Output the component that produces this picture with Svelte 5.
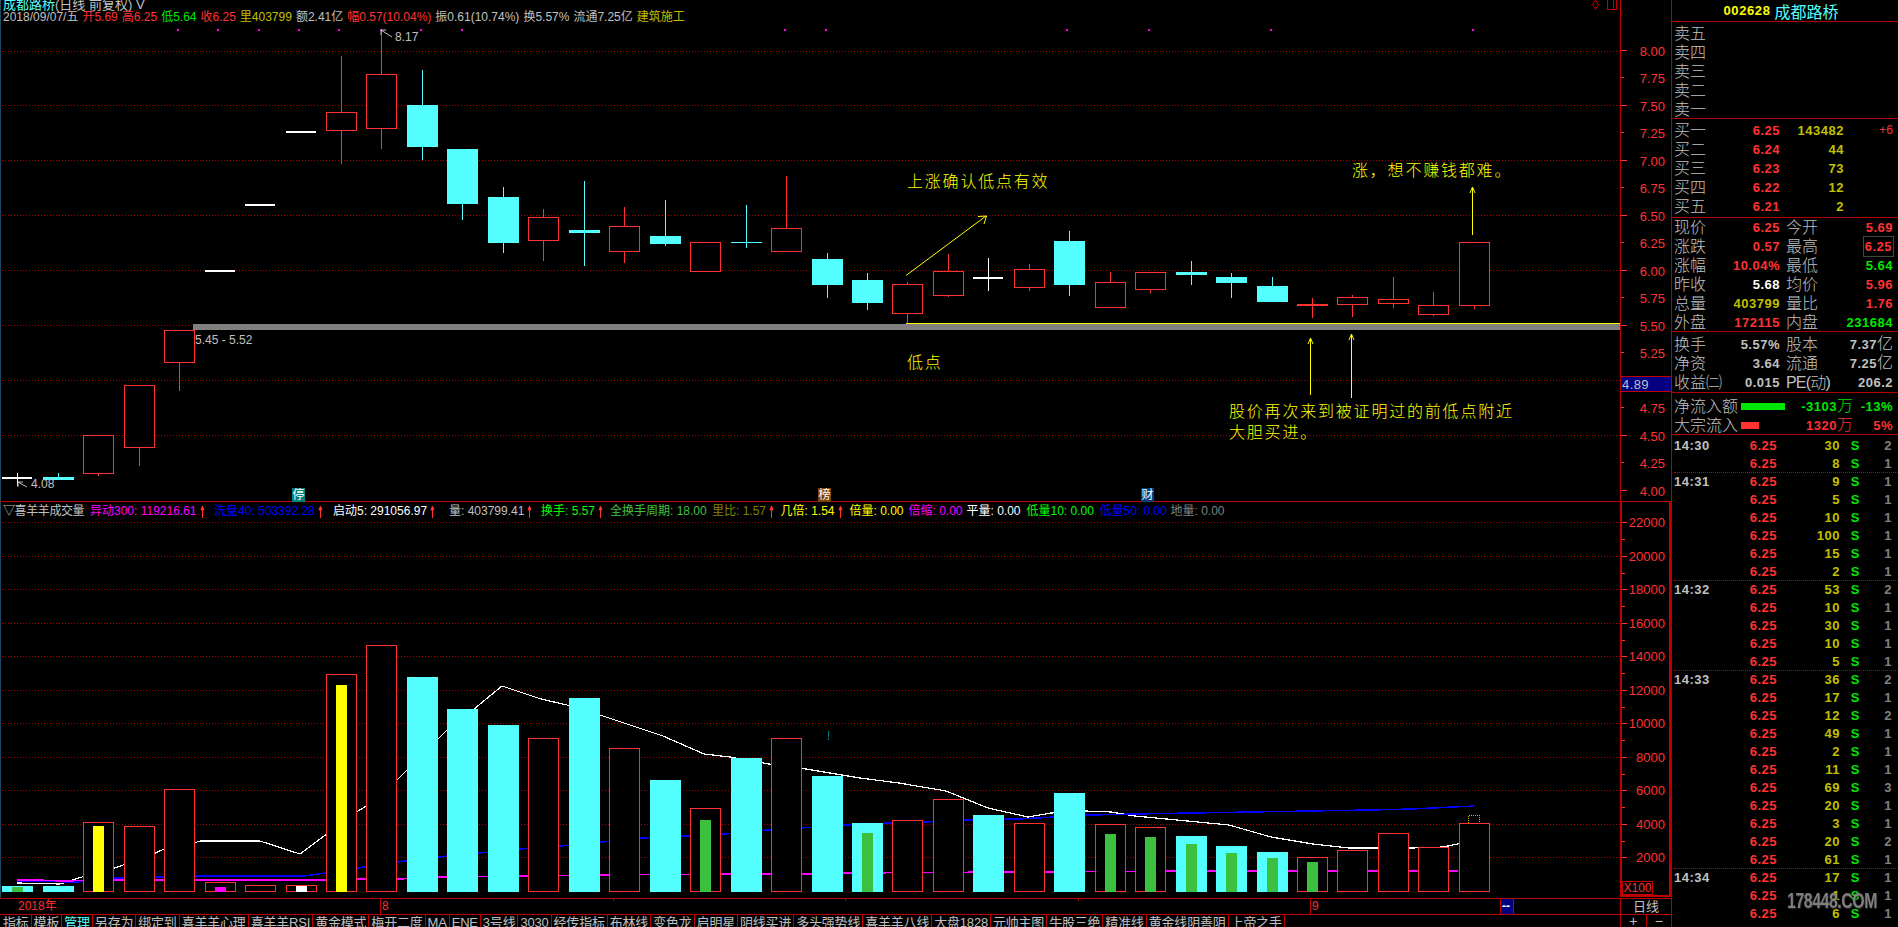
<script>
	// candle position on the shared day axis
	const dayX = (i) => Math.round(17.3 + 40.46 * i);

	// [type, wickTop, bodyTop, bodyBottom, wickBottom]  r = up, c = down, w = flat
	const candles = [
		['w', 473, 477, 477, 485],
		['c', 473, 477, 480, 480],
		['r', 435, 435, 473, 476],
		['r', 385, 385, 447, 466],
		['r', 330, 330, 362, 391],
		['w', 270, 270, 270, 270],
		['w', 204, 204, 204, 204],
		['w', 131, 131, 131, 131],
		['r', 56, 112, 130, 164],
		['r', 30, 74, 128, 149],
		['c', 70, 105, 147, 160],
		['c', 149, 149, 204, 220],
		['c', 187, 197, 243, 253],
		['r', 209, 217, 240, 261],
		['c', 181, 230, 233, 266],
		['r', 207, 226, 251, 263],
		['c', 200, 236, 244, 246],
		['r', 242, 242, 271, 271],
		['c', 205, 242, 243, 248],
		['r', 176, 228, 251, 251],
		['c', 253, 259, 285, 298],
		['c', 273, 280, 303, 310],
		['r', 282, 284, 313, 323],
		['r', 254, 271, 295, 297],
		['w', 258, 277, 277, 290],
		['r', 264, 269, 287, 291],
		['c', 231, 241, 285, 296],
		['r', 272, 282, 307, 307],
		['r', 272, 272, 289, 293],
		['c', 261, 272, 275, 285],
		['c', 273, 277, 283, 298],
		['c', 277, 286, 302, 302],
		['s', 298, 304, 306, 318],
		['r', 295, 297, 304, 317],
		['r', 277, 299, 303, 308],
		['r', 292, 305, 314, 316],
		['r', 242, 242, 305, 309]
	];

	// [type, top, innerColor, innerTop]
	const bars = [
		['c', 886, '#3cc040', 887],
		['c', 886],
		['r', 822, '#ffff00', 826],
		['r', 826],
		['r', 789],
		['r', 882, '#ff00ff', 887],
		['r', 885],
		['r', 885, '#ffffff', 886],
		['r', 674, '#ffff00', 685],
		['r', 645],
		['c', 677],
		['c', 709],
		['c', 725],
		['r', 738],
		['c', 698],
		['r', 748],
		['c', 780],
		['r', 808, '#3cc040', 820],
		['c', 758],
		['r', 738],
		['c', 776],
		['c', 823, '#3cc040', 833],
		['r', 820],
		['r', 799],
		['c', 815],
		['r', 823],
		['c', 793],
		['r', 824, '#3cc040', 834],
		['r', 827, '#3cc040', 837],
		['c', 836, '#3cc040', 844],
		['c', 846, '#3cc040', 853],
		['c', 852, '#3cc040', 858],
		['r', 857, '#3cc040', 862],
		['r', 850],
		['r', 833],
		['r', 847],
		['r', 823]
	];

	const whiteLine = '17,883 60,884 82,877 115,868 153,854 162,850 194,843 200,841 260,841 300,854 324,836 355,813 366,806 398,779 408,769 438,739 447,730 474,709 502,686 541,699 567,705 600,715 663,736 704,754 730,757 769,764 800,768 860,778 899,783 946,791 988,808 1028,817 1051,813 1085,811 1111,812 1135,816 1177,820 1229,825 1271,837 1313,844 1349,848 1373,848 1412,848 1443,847 1458,844 1473,838';
	const blueLine = '17,881 76,882 117,878 194,876 303,876 326,873 357,868 398,862 438,857 480,853 520,849 561,846 602,842 643,838 684,836 724,834 768,830 800,828 863,824 925,822 967,820 1019,819 1090,815 1135,814 1250,812 1370,810 1412,809 1474,806';
	const pinkLine = '17,880 38,880 60,881 115,880 321,880 357,879 398,879 444,877 525,876 602,875 724,874 800,874 847,873 1009,872 1210,871 1458,871';

	const priceDots = [178, 218, 259, 299, 339, 381, 421, 462, 785, 826, 1067, 1149, 1271, 1473];
	const priceGrid = [51, 105, 160, 215, 270, 325, 380, 435];
	const priceTicks = ['8.00', '7.75', '7.50', '7.25', '7.00', '6.75', '6.50', '6.25', '6.00', '5.75', '5.50', '5.25', '5.00', '4.75', '4.50', '4.25', '4.00'];
	const priceY = (p) => Math.round(50.7 + (8 - p) * 110);
	const volTicks = [22000, 20000, 18000, 16000, 14000, 12000, 10000, 8000, 6000, 4000, 2000];
	const volY = (v) => Math.round(857.3 - ((v - 2000) / 2000) * 33.5);

	const indicators = [
		{ text: '异动300: 119216.61', color: '#ff00ff', up: true, w: 124 },
		{ text: '洗盘40: 503392.28', color: '#0000ff', up: true, w: 119 },
		{ text: '启动5: 291056.97', color: '#ffffff', up: true, w: 116 },
		{ text: '量: 403799.41', color: '#c0c0c0', up: true, w: 92 },
		{ text: '换手: 5.57', color: '#00ff00', up: true, w: 69 },
		{ text: '全换手周期: 18.00', color: '#40c040', up: false, w: 102 },
		{ text: '里比: 1.57', color: '#808000', up: true, w: 68.5 },
		{ text: '几倍: 1.54', color: '#ffff00', up: true, w: 69 },
		{ text: '倍量: 0.00', color: '#ffff00', up: false, w: 59 },
		{ text: '倍缩: 0.00', color: '#ff00ff', up: false, w: 58 },
		{ text: '平量: 0.00', color: '#ffffff', up: false, w: 60 },
		{ text: '低量10: 0.00', color: '#00ff00', up: false, w: 73 },
		{ text: '低量50: 0.00', color: '#0000ff', up: false, w: 71 },
		{ text: '地量: 0.00', color: '#808080', up: false, w: 60 }
	];

	const tabs = ['指标', '模板', '管理', '另存为', '绑定到', '喜羊羊心理', '喜羊羊RSI', '黄金模式', '梅开二度', 'MA', 'ENE', '3号线', '3030', '经传指标', '布林线', '变色龙', '启明星', '阴线买进', '多头强势线', '喜羊羊八线', '大盘1828', '元帅主图', '牛股三绝', '精准线', '黄金线阴善阴', '上帝之手'];

	const asks = ['卖五', '卖四', '卖三', '卖二', '卖一'];
	const bids = [
		['买一', '6.25', '143482', '+6'],
		['买二', '6.24', '44', ''],
		['买三', '6.23', '73', ''],
		['买四', '6.22', '12', ''],
		['买五', '6.21', '2', '']
	];
	const quotes = [
		['现价', '6.25', 'red', '今开', '5.69', 'red'],
		['涨跌', '0.57', 'red', '最高', '6.25', 'red boxed'],
		['涨幅', '10.04%', 'red', '最低', '5.64', 'green'],
		['昨收', '5.68', 'white', '均价', '5.96', 'red'],
		['总量', '403799', 'olive', '量比', '1.76', 'red'],
		['外盘', '172115', 'red', '内盘', '231684', 'green']
	];
	const finance = [
		['换手', '5.57%', '股本', '7.37', '亿'],
		['净资', '3.64', '流通', '7.25', '亿'],
		['收益㈡', '0.015', 'PE(动)', '206.2', '']
	];
	const ticks = [
		{ time: '14:30', rows: [[30, 2], [8, 1]] },
		{ time: '14:31', rows: [[9, 1], [5, 1], [10, 1], [100, 1], [15, 1], [2, 1]] },
		{ time: '14:32', rows: [[53, 2], [10, 1], [30, 1], [10, 1], [5, 1]] },
		{ time: '14:33', rows: [[36, 2], [17, 1], [12, 2], [49, 1], [2, 1], [11, 1], [69, 3], [20, 1], [3, 1], [20, 2], [61, 1]] },
		{ time: '14:34', rows: [[17, 1], [1, 1], [6, 1]] }
	];
</script>

<div class="terminal">
	<div class="left">
		<div class="pane price-pane">
			<div class="canvas">
				<svg width="1620" height="501" shape-rendering="crispEdges">
					{#each priceGrid as y}
						<line class="grid" x1="2" x2="1620" y1={y + 0.5} y2={y + 0.5} />
					{/each}
					{#each priceDots as x}
						<rect x={x - 1} y="29" width="2" height="2" fill="#ff00ff" />
					{/each}

					<rect x="193" y="324" width="1427" height="6" fill="#808080" />
					<line x1="906" x2="1620" y1="323.5" y2="323.5" stroke="#ffff00" />

					{#each candles as c, i}
						{@const x = dayX(i)}
						{#if c[0] === 'r' || c[0] === 's'}
							<line x1={x + 0.5} x2={x + 0.5} y1={c[1]} y2={c[4]} stroke="#ff3232" />
							{#if c[0] === 's'}
								<rect x={x - 15} y={c[2]} width="31" height={c[3] - c[2]} fill="#ff3232" />
							{:else}
								<rect x={x - 15 + 0.5} y={c[2] + 0.5} width="30" height={c[3] - c[2]} fill="#000" stroke="#ff3232" />
							{/if}
						{:else if c[0] === 'c'}
							<line x1={x + 0.5} x2={x + 0.5} y1={c[1]} y2={c[4]} stroke="#54ffff" />
							<rect x={x - 15} y={c[2]} width="31" height={c[3] - c[2]} fill="#54ffff" />
						{:else}
							<line x1={x + 0.5} x2={x + 0.5} y1={c[1]} y2={c[4] + 1} stroke="#ffffff" />
							<rect x={x - 15} y={c[2]} width="30" height="1.5" fill="#ffffff" />
						{/if}
					{/each}

					<g shape-rendering="auto" fill="none" stroke="#ffff00">
						<path d="M906 275.5 L986 216 M978 216.5 L986.5 216 L984 224" />
						<path d="M1472.5 235 V187 M1470 193 L1472.5 187 L1475 193" />
						<path d="M1310.5 395 V338 M1308 344 L1310.5 338 L1313 344" />
						<path d="M1351.5 398 V334 M1349 340 L1351.5 334 L1354 340" />
					</g>
					<g shape-rendering="auto" fill="none" stroke="#c0c0c0">
						<path d="M381 30 L392 37 M381 30 V35 M381 30 H386" />
						<path d="M18 482 L27 487 M18 482 V487 M18 482 H23" />
					</g>

					<text class="note" x="907" y="187">上涨确认低点有效</text>
					<text class="note" x="1352" y="176">涨，想不赚钱都难。</text>
					<text class="note" x="907" y="368">低点</text>
					<text class="note" x="1229" y="417">股价再次来到被证明过的前低点附近</text>
					<text class="note" x="1229" y="438">大胆买进。</text>
					<text class="mark" x="395" y="41">8.17</text>
					<text class="mark" x="31" y="488">4.08</text>
					<text class="mark" x="195" y="344">5.45 - 5.52</text>

					<rect x="1607.5" y="-1" width="9" height="10" fill="none" stroke="#c00000" />
					<line x1="1613.5" x2="1613.5" y1="0" y2="9" stroke="#c00000" />
					<path shape-rendering="auto" d="M1595.5 0 L1598.5 4.5 L1595.5 9.5 L1592.5 4.5 Z" fill="none" stroke="#c00000" />
				</svg>

				<div class="quote-head">
					<div class="line-name"><span class="cyan">成都路桥</span>(日线 前复权) V</div>
					<div class="line-quote">
						<span>2018/09/07/五</span>
						<span class="red">开5.69</span>
						<span class="red">高6.25</span>
						<span class="lime">低5.64</span>
						<span class="red">收6.25</span>
						<span class="olive">里403799</span>
						<span>额2.41亿</span>
						<span class="red">幅0.57(10.04%)</span>
						<span>振0.61(10.74%)</span>
						<span>换5.57%</span>
						<span>流通7.25亿</span>
						<span class="olive">建筑施工</span>
					</div>
				</div>

				<span class="flag flag-ting">停</span>
				<span class="flag flag-bang">榜</span>
				<span class="flag flag-cai">财</span>
			</div>

			<div class="axis">
				<svg width="50" height="501">
					{#each priceTicks as p}
						{#if p !== '5.00'}
							<text class="tick-label" x="44" y={priceY(+p) + 5}>{p}</text>
						{/if}
						<line x1="0" x2={+p * 4 % 2 === 0 ? 6 : 3} y1={priceY(+p) - 0.5} y2={priceY(+p) - 0.5} stroke="#ff3232" />
					{/each}
				</svg>
				<div class="last-price">4.89</div>
			</div>
		</div>

		<div class="pane vol-pane">
			<div class="canvas">
				<svg class="vol-chart" width="1620" height="396" viewBox="0 502 1620 396" shape-rendering="crispEdges">
					{#each volTicks as v}
						<line class="grid" x1="2" x2="1620" y1={volY(v) + 0.5} y2={volY(v) + 0.5} />
					{/each}
					<g fill="none">
						<polyline points={whiteLine} stroke="#ffffff" stroke-width="1.2" />
						<polyline points={blueLine} stroke="#0000ff" stroke-width="1.5" />
						<polyline points={pinkLine} stroke="#ff00ff" stroke-width="1.5" />
					</g>
					{#each bars as b, i}
						{@const x = dayX(i)}
						{#if b[0] === 'c'}
							<rect x={x - 15} y={b[1]} width="31" height={892 - b[1]} fill="#54ffff" />
						{:else}
							<rect x={x - 15 + 0.5} y={b[1] + 0.5} width="30" height={891 - b[1]} fill="#000" stroke="#ff3232" />
						{/if}
						{#if b[2]}
							<rect x={x - 5} y={b[3]} width="11" height={892 - b[3]} fill={b[2]} />
						{/if}
					{/each}
					<path d="M1468.5 823 V815.5 H1479.5 V823" fill="none" stroke="#c0c000" stroke-dasharray="1 1" />
					<line x1="828.5" x2="828.5" y1="731" y2="737" stroke="#008080" />
					<line x1="828.5" x2="828.5" y1="738" y2="740" stroke="#008080" />
				</svg>
				<div class="indicator-head">
					<span class="ind-title">▽喜羊羊成交量</span>
					{#each indicators as ind}
						<span class="ind" style="color: {ind.color}; width: {ind.w}px">
							{ind.text}
							{#if ind.up}
								<svg class="up" width="5" height="13" viewBox="0 0 5 13">
									<path d="M2.5 1 V13 M1 5 L2.5 1 L4 5 Z" fill="#ff3232" stroke="#ff3232" />
								</svg>
							{/if}
						</span>
					{/each}
				</div>
			</div>
			<div class="axis vol-axis">
				<svg width="48" height="392" viewBox="0 502 48 392">
					{#each volTicks as v}
						<text class="tick-label" x="43" y={volY(v) + 5}>{v}</text>
						<line x1="0" x2="5" y1={volY(v) + 0.5} y2={volY(v) + 0.5} stroke="#ff3232" shape-rendering="crispEdges" />
						{#if v > 2000}
							<line x1="0" x2="3" y1={volY(v) + 17.5} y2={volY(v) + 17.5} stroke="#ff3232" shape-rendering="crispEdges" />
						{/if}
					{/each}
				</svg>
				<div class="scale-tag">X100</div>
			</div>
		</div>

		<div class="date-row">
			<div class="date-bar">
				<span class="year">2018年</span>
				<span class="month month-8">8</span>
				<span class="month month-9">9</span>
				<i class="notch n1"></i>
				<i class="notch n2"></i>
				<i class="notch n3"></i>
				<span class="cursor">--</span>
			</div>
			<div class="period">日线</div>
		</div>

		<div class="tab-row">
			<div class="tabs">
				{#each tabs as tab}
					<span class="tab" class:active={tab === '管理'}>{tab}</span>
				{/each}
			</div>
			<div class="zoom-btns"><span>+</span><span>−</span></div>
		</div>
	</div>

	<aside class="side">
		<div class="title"><b>002628</b><span>成都路桥</span></div>

		<section class="book asks">
			{#each asks as a}
				<div class="row"><span class="lbl">{a}</span></div>
			{/each}
		</section>

		<section class="book bids">
			{#each bids as b}
				<div class="row">
					<span class="lbl">{b[0]}</span>
					<b class="num red">{b[1]}</b>
					<b class="num olive">{b[2]}</b>
					<span class="delta">{b[3]}</span>
				</div>
			{/each}
		</section>

		<section class="stats quotes">
			{#each quotes as q}
				<div class="stat-row">
					<span class="lbl">{q[0]}</span>
					<b class="num {q[2]}">{q[1]}</b>
					<span class="lbl lbl2">{q[3]}</span>
					<b class="num {q[5]}">{q[4]}</b>
				</div>
			{/each}
		</section>

		<section class="stats finance">
			{#each finance as f}
				<div class="stat-row">
					<span class="lbl">{f[0]}</span>
					<b class="num gray">{f[1]}</b>
					<span class="lbl lbl2" class:tight={f[2].startsWith('PE')}>{f[2]}</span>
					<b class="num gray">{f[3]}<span class="unit">{f[4]}</span></b>
				</div>
			{/each}
		</section>

		<section class="flows">
			<div class="flow">
				<span class="lbl">净流入额</span>
				<i class="flow-bar in"></i>
				<b class="amount lime">-3103<span class="unit">万</span></b>
				<b class="pct lime">-13%</b>
			</div>
			<div class="flow">
				<span class="lbl">大宗流入</span>
				<i class="flow-bar big"></i>
				<b class="amount red">1320<span class="unit">万</span></b>
				<b class="pct red">5%</b>
			</div>
		</section>

		<section class="ticks">
			{#each ticks as group, g}
				<div class="tick-group" class:first={g === 0}>
					{#each group.rows as r, i}
						<div class="tick">
							<b class="time">{i === 0 ? group.time : ''}</b>
							<b class="t-price">6.25</b>
							<b class="t-vol">{r[0]}</b>
							<b class="t-side">S</b>
							<b class="t-count">{r[1]}</b>
						</div>
					{/each}
				</div>
			{/each}
		</section>

		<div class="watermark">178448.COM</div>
	</aside>
</div>

<style>
	:global(body) {
		margin: 0;
		background: #000;
		overflow: hidden;
	}

	.terminal {
		display: flex;
		width: 1898px;
		height: 927px;
		overflow: hidden;
		background: #000;
		color: #c0c0c0;
		font-family: "Liberation Sans", "Noto Sans CJK SC", sans-serif;
		font-size: 12px;
	}

	svg {
		display: block;
	}

	.left {
		display: flex;
		flex-direction: column;
		width: 1671px;
		flex: none;
		border-right: 1px solid #b00000;
		box-sizing: content-box;
	}

	.pane {
		display: flex;
	}

	.price-pane {
		height: 501px;
		border-bottom: 1px solid #c00000;
	}

	.vol-pane {
		height: 396px;
	}

	.canvas {
		position: relative;
		width: 1620px;
		flex: none;
		box-shadow: inset 1px 0 0 #1f4a60;
	}

	.grid {
		stroke: #a80000;
		stroke-dasharray: 1 2;
	}

	.note {
		fill: #ffff00;
		font-size: 16px;
		letter-spacing: 1.8px;
		font-weight: 300;
	}

	.mark {
		fill: #c0c0c0;
		font-size: 12px;
	}

	.tick-label {
		fill: #ff3232;
		font-size: 13px;
		text-anchor: end;
	}

	.quote-head {
		position: absolute;
		left: 3px;
		top: -3px;
		white-space: nowrap;
		line-height: 15px;
	}

	.line-name {
		font-size: 13px;
		height: 13px;
	}

	.line-quote {
		display: flex;
		gap: 4px;
		margin-top: 0;
	}

	.cyan {
		color: #54ffff;
	}

	.red {
		color: #ff3232;
	}

	.lime {
		color: #00e800;
	}

	.green {
		color: #00e800;
	}

	.olive {
		color: #c0c000;
	}

	.white {
		color: #fff;
	}

	.gray {
		color: #c0c0c0;
	}

	.flag {
		position: absolute;
		top: 488px;
		width: 13px;
		height: 14px;
		font-size: 12px;
		line-height: 14px;
		text-align: center;
		color: #fff;
	}

	.flag-ting {
		left: 292px;
		background: #008080;
	}

	.flag-bang {
		left: 818px;
		background: #804000;
	}

	.flag-cai {
		left: 1141px;
		background: #004080;
	}

	.axis {
		position: relative;
		flex: none;
		width: 51px;
		box-sizing: border-box;
		border-left: 1px solid #c00000;
	}

	.last-price {
		position: absolute;
		left: 0;
		top: 376px;
		width: 50px;
		height: 16px;
		padding-left: 1px;
		box-sizing: border-box;
		background: #000080;
		color: #c0c0c0;
		font-size: 13px;
		line-height: 15px;
		letter-spacing: 0.4px;
		border-top: 1px solid #c00000;
		border-bottom: 1px solid #c00000;
	}

	.vol-axis {
		border: 2px solid #c00000;
		border-top: 0;
		height: 395px;
	}

	.scale-tag {
		position: absolute;
		left: 0;
		bottom: 0;
		width: 31px;
		height: 14px;
		box-sizing: border-box;
		border: 1px solid #c00000;
		color: #ff3232;
		font-size: 12px;
		line-height: 13px;
		text-align: center;
	}

	.indicator-head {
		position: absolute;
		left: 3px;
		top: 1px;
		display: flex;
		height: 16px;
		line-height: 16px;
		white-space: nowrap;
		align-items: center;
	}

	.ind-title {
		width: 87px;
		flex: none;
		letter-spacing: -0.4px;
	}

	.ind {
		flex: none;
		display: flex;
		align-items: center;
		justify-content: flex-start;
	}

	.up {
		margin-left: 3px;
		flex: none;
	}

	.date-row,
	.tab-row {
		display: flex;
		border-top: 1px solid #c00000;
		box-sizing: border-box;
	}

	.date-row {
		height: 16px;
	}

	.tab-row {
		height: 14px;
		overflow: hidden;
	}

	.date-bar {
		position: relative;
		width: 1620px;
		flex: none;
	}

	.year {
		position: absolute;
		left: 18px;
		top: 0;
		color: #ff3232;
		line-height: 15px;
	}

	.month {
		position: absolute;
		top: 0;
		height: 15px;
		padding-left: 1px;
		color: #ff3232;
		line-height: 15px;
		border-left: 1px solid #c00000;
	}

	.month-8 {
		left: 380px;
	}

	.month-9 {
		left: 1310px;
	}

	.notch {
		position: absolute;
		top: 0;
		width: 1px;
		height: 2px;
		background: #c00000;
	}

	.n1 {
		left: 613px;
	}

	.n2 {
		left: 845px;
	}

	.n3 {
		left: 1078px;
	}

	.cursor {
		position: absolute;
		left: 1500px;
		top: 0;
		width: 14px;
		height: 15px;
		background: #000080;
		color: #fff;
		font-weight: 700;
		line-height: 14px;
		border-left: 1px solid #c00000;
		border-right: 1px solid #c00000;
		text-align: left;
		padding-left: 1px;
		box-sizing: border-box;
	}

	.period {
		flex: 1;
		border-left: 1px solid #c00000;
		color: #c0c0c0;
		font-size: 13px;
		line-height: 15px;
		text-align: center;
	}

	.tabs {
		display: flex;
		width: 1620px;
		flex: none;
		padding-left: 1px;
		box-sizing: border-box;
	}

	.tab {
		padding: 0 2px;
		border-right: 1px solid #c00000;
		font-size: 13px;
		letter-spacing: -0.2px;
		line-height: 16px;
		white-space: nowrap;
	}

	.tab.active {
		color: #54ffff;
	}

	.zoom-btns {
		display: flex;
		flex: 1;
		border-left: 1px solid #c00000;
	}

	.zoom-btns span {
		flex: 1;
		text-align: center;
		line-height: 13px;
		font-size: 14px;
	}

	.zoom-btns span + span {
		border-left: 1px solid #c00000;
	}

	.side {
		position: relative;
		flex: 1;
		min-width: 0;
		overflow: hidden;
		font-size: 13px;
	}

	.title {
		display: flex;
		justify-content: center;
		align-items: center;
		gap: 4px;
		height: 21px;
		border-bottom: 1px solid #b00000;
		padding-right: 8px;
	}

	.title b {
		color: #ffff00;
		font-size: 13px;
		letter-spacing: 0.6px;
	}

	.title span {
		color: #54ffff;
		font-size: 16px;
	}

	section {
		box-sizing: border-box;
		border-bottom: 1px solid #b00000;
	}

	.lbl {
		font-size: 16px;
		font-weight: 300;
		color: #c0c0c0;
		white-space: nowrap;
	}

	.lbl.tight {
		letter-spacing: -0.8px;
	}

	.unit {
		font-size: 16px;
		font-weight: 300;
		letter-spacing: 0;
	}

	.num {
		text-align: right;
		letter-spacing: 0.5px;
	}

	.book {
		padding-left: 2px;
	}

	.asks {
		height: 97px;
		padding-top: 2px;
	}

	.bids {
		height: 99px;
		padding-top: 2px;
	}

	.row {
		display: grid;
		grid-template-columns: 32px 74px 64px 49px;
		height: 19px;
		line-height: 19px;
		align-items: center;
	}

	.delta {
		color: #ff3232;
		font-size: 12px;
		text-align: right;
	}

	.stats {
		padding-left: 2px;
	}

	.quotes {
		height: 114px;
		padding-top: 0;
	}

	.finance {
		height: 61px;
		padding-top: 2px;
	}

	.stat-row {
		display: grid;
		grid-template-columns: 32px 74px 6px 32px 75px;
		height: 19px;
		line-height: 19px;
		align-items: center;
		position: relative;
	}

	.stat-row .lbl:first-child {
		grid-column: 1;
		overflow: visible;
	}

	.stat-row .num:nth-child(2) {
		grid-column: 2;
	}

	.lbl2 {
		grid-column: 4;
	}

	.stat-row .num:nth-child(4) {
		grid-column: 5;
	}

	.boxed {
		justify-self: end;
		outline: 1px solid #444;
		padding: 0 1px;
	}

	.flows {
		height: 42px;
		padding-left: 2px;
		padding-top: 3px;
	}

	.flow {
		display: grid;
		grid-template-columns: 67px 44px 68px 40px;
		height: 19px;
		line-height: 19px;
		align-items: center;
	}

	.flow-bar {
		height: 7px;
		display: block;
		margin-top: 0;
	}

	.flow-bar.in {
		width: 44px;
		background: #00e800;
	}

	.flow-bar.big {
		width: 18px;
		background: #ff3232;
	}

	.amount,
	.pct {
		text-align: right;
		letter-spacing: 0.5px;
	}

	.ticks {
		border: 0;
		padding: 3px 0 0 2px;
	}

	.tick-group {
		border-top: 1px dotted #c00000;
		margin-top: -1px;
	}

	.tick-group.first {
		border-top: 0;
	}

	.tick {
		display: grid;
		grid-template-columns: 52px 51px 63px 20px 1fr;
		height: 18px;
		line-height: 18px;
		letter-spacing: 0.5px;
		padding-right: 6px;
	}

	.time {
		color: #c0c0c0;
	}

	.t-price {
		color: #ff3232;
		text-align: right;
	}

	.t-vol {
		color: #c0c000;
		text-align: right;
	}

	.t-side {
		color: #00e800;
		text-align: right;
	}

	.t-count {
		color: #808080;
		text-align: right;
	}

	.watermark {
		position: absolute;
		left: 115px;
		top: 889px;
		color: #8a8a8a;
		font-size: 22px;
		font-weight: 700;
		letter-spacing: -0.6px;
		line-height: 24px;
		opacity: 0.92;
		filter: blur(0.6px);
		text-shadow: 1px 1px 2px #333;
		transform: scaleX(0.72);
		transform-origin: left center;
	}
</style>
